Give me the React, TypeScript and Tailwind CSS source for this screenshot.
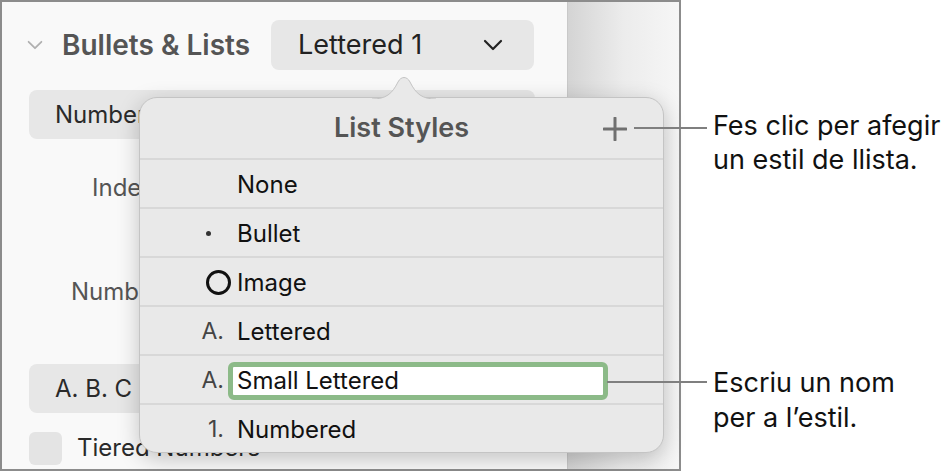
const FONT = "font-['Inter','Noto_Sans',sans-serif]";

const ROWS = [
  { prefix: "", label: "None" },
  { prefix: "•", label: "Bullet" },
  { prefix: "ring", label: "Image" },
  { prefix: "A.", label: "Lettered" },
  { prefix: "A.", label: "Small Lettered", editing: true },
  { prefix: "1.", label: "Numbered" },
];

function Chevron({ className }: { className?: string }) {
  return (
    <svg viewBox="0 0 20 12" className={className} fill="none">
      <path d="M2 2l8 8 8-8" stroke="currentColor" strokeWidth="2.2" strokeLinecap="round" strokeLinejoin="round" />
    </svg>
  );
}

function Sidebar() {
  return (
    <div className="flex h-full w-[566px] shrink-0 flex-col border-r border-[#c9c9c9] bg-[#f9f9f9] text-[#2a2a2a]">
      <div className="mt-[18px] flex h-[50px] items-center">
        <Chevron className="ml-[25px] h-[10px] w-[16px] text-[#b0b0b0]" />
        <span className="ml-[19px] whitespace-nowrap text-[28px] font-semibold text-[#555]">Bullets &amp; Lists</span>
        <div className="ml-[21px] flex h-[50px] w-[263px] shrink-0 items-center justify-between rounded-lg bg-[#e7e7e7] pl-[27px] pr-[30px]">
          <span className="text-[27px] text-[#222]">Lettered 1</span>
          <Chevron className="h-[12px] w-[22px] text-[#222]" />
        </div>
      </div>
      <div className="ml-[27px] mt-[20px] flex h-[49px] w-[506px] items-center rounded-lg bg-[#e7e7e7] pl-[26px] text-[24px]">
        Numbered
      </div>
      <div className="ml-[90px] mt-[34px] flex h-[30px] items-center text-[24px] text-[#555]">Indent</div>
      <div className="ml-[69px] mt-[74px] flex h-[30px] items-center text-[24px] text-[#555]">Number</div>
      <div className="ml-[27px] mt-[57px] flex h-[49px] w-[506px] items-center rounded-lg bg-[#e7e7e7] pl-[26px] text-[24px]">
        A. B. C
      </div>
      <div className="ml-[27px] mt-[17px] flex items-center">
        <div className="h-[33px] w-[33px] rounded-md bg-[#e4e4e4]" />
        <span className="ml-[15px] text-[24px]">Tiered Numbers</span>
      </div>
    </div>
  );
}

function Prefix({ kind }: { kind: string }) {
  if (kind === "ring") {
    return <span className="-mr-[7px] h-[25px] w-[25px] rounded-full border-[3px] border-[#111]" />;
  }
  if (kind === "•") {
    return <span className="mr-[13px] h-[5px] w-[5px] rounded-full bg-[#333]" />;
  }
  return <span className="text-[23px] text-[#444]">{kind}</span>;
}

function Popover() {
  return (
    <div className="absolute left-[139px] top-[97px] w-[525px] rounded-[18px] border border-[#c4c4c4] bg-[#e9e9e9] shadow-[0_6px_22px_rgba(0,0,0,0.22)]">
      <svg className="absolute left-[232px] top-[-24px]" width="64" height="26" viewBox="0 0 64 26">
        <path d="M0 25 C14 25 20 20 26 8 C29 2 35 2 38 8 C44 20 50 25 64 25" fill="#e9e9e9" stroke="#c4c4c4" strokeWidth="1" />
        <rect x="0" y="25" width="64" height="2" fill="#e9e9e9" />
      </svg>
      <div className="relative flex h-[60px] items-center justify-center">
        <span className="text-[27px] font-semibold text-[#555]">List Styles</span>
        <svg className="absolute left-[463px] top-[19px]" width="24" height="24" viewBox="0 0 24 24">
          <path d="M12 1v22M1 12h22" stroke="#707070" strokeWidth="3" strokeLinecap="round" />
        </svg>
      </div>
      {ROWS.map((row) => (
        <div key={row.label} className="flex h-[49px] items-center border-t-2 border-[#d8d8d8] pt-[2px]">
          <div className="flex w-[84px] shrink-0 items-center justify-end">
            {row.prefix && <Prefix kind={row.prefix} />}
          </div>
          {row.editing ? (
            <div className="ml-[4px] flex h-[38px] w-[380px] items-center rounded-[6px] border-[5px] border-[#8cba88] bg-white pl-[4px] text-[24px] text-[#111]">
              {row.label}
            </div>
          ) : (
            <span className="ml-[13px] text-[24px] text-[#111]">{row.label}</span>
          )}
        </div>
      ))}
    </div>
  );
}

export default function App() {
  return (
    <div className={`relative flex h-[471px] w-[952px] bg-white ${FONT}`}>
      <div className="flex h-[471px] w-[681px] overflow-hidden border-2 border-[#8c8c8c]">
        <Sidebar />
        <div className="flex-1 bg-gradient-to-r from-[#d4d4d4] via-[#ececec] to-[#f6f6f6]" />
      </div>
      <Popover />
      <div className="absolute left-[634px] top-[127px] h-[2px] w-[73px] bg-[#7f7f7f]" />
      <div className="absolute left-[607px] top-[381px] h-[2px] w-[100px] bg-[#7f7f7f]" />
      <div className="absolute left-[713px] top-[109px] text-[27px] leading-[34px] text-[#111]">
        Fes clic per afegir
        <br />
        un estil de llista.
      </div>
      <div className="absolute left-[713px] top-[365px] text-[27px] leading-[35px] text-[#111]">
        Escriu un nom
        <br />
        per a l’estil.
      </div>
    </div>
  );
}
